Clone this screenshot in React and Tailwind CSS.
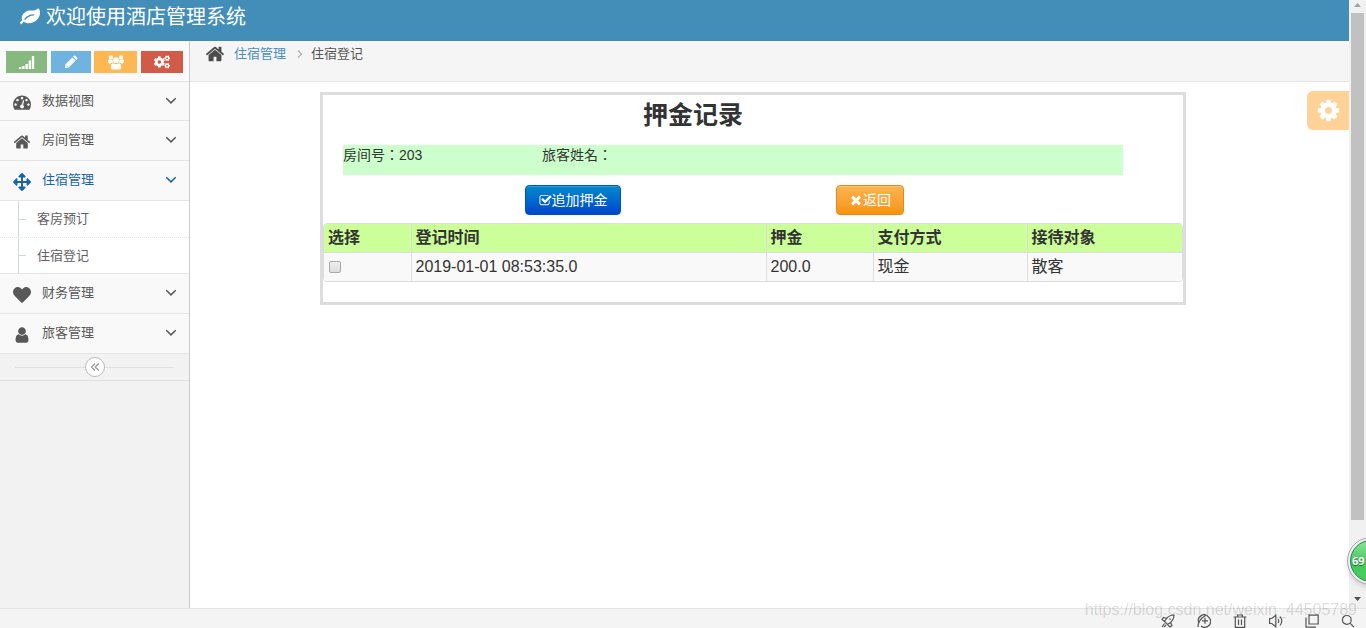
import React, { useState } from "react";
import { FaArrowsAlt, FaCogs, FaHeart } from "react-icons/fa";

const paths = {
  leaf: "M1280 704q0-26-19-45t-45-19q-172 0-318 49.5t-259.5 134-235.5 219.5q-19 21-19 45 0 26 19 45t45 19q24 0 45-19 27-24 74-71t67-66q137-124 268.5-176t313.5-52q26 0 45-19t19-45zm512-198q0 95-20 193-46 224-184.5 383t-357.5 268q-214 108-438 108-148 0-286-47-15-5-88-42t-96-37q-16 0-39.5 32t-45 70-52.5 70-60 32q-43 0-63.5-17.5t-45.5-59.5q-2-4-6-11t-5.5-10-3-9.5-1.5-13.5q0-35 31-73.5t68-65.5 68-56 31-48q0-4-14-38t-16-44q-9-51-9-104 0-115 43.5-220t119-184.5 170.5-139 204-95.5q55-18 145-25.5t179.5-9 178.5-6 163.5-24 113.5-56.5l29.5-29.5 29.5-28 27-20 36.5-16 43.5-4.5q39 0 70.5 46t47.5 112 24 124 8 96z",
  home: "M1472 992v480q0 26-19 45t-45 19h-384v-384h-256v384h-384q-26 0-45-19t-19-45v-480q0-1 .5-3t.5-3l575-474 575 474q1 2 1 6zm223-69l-62 74q-8 9-21 11h-3q-13 0-21-7l-692-577-692 577q-12 8-24 7-13-2-21-11l-62-74q-8-10-7-23.5t11-21.5l719-599q32-26 76-26t76 26l244 204v-195q0-14 9-23t23-9h192q14 0 23 9t9 23v408l219 182q10 8 11 21.5t-7 23.5z",
  dashboard: "M384 1152q0-53-37.5-90.5t-90.5-37.5-90.5 37.5-37.5 90.5 37.5 90.5 90.5 37.5 90.5-37.5 37.5-90.5zm192-448q0-53-37.5-90.5t-90.5-37.5-90.5 37.5-37.5 90.5 37.5 90.5 90.5 37.5 90.5-37.5 37.5-90.5zm428 481l101-382q6-26-7.5-48.5t-38.5-29.5-48 6.5-30 39.5l-101 382q-60 5-107 43.5t-63 98.5q-20 77 20 146t117 89 146-20 89-117q16-60-6-117t-72-91zm660-33q0-53-37.5-90.5t-90.5-37.5-90.5 37.5-37.5 90.5 37.5 90.5 90.5 37.5 90.5-37.5 37.5-90.5zm-640-640q0-53-37.5-90.5t-90.5-37.5-90.5 37.5-37.5 90.5 37.5 90.5 90.5 37.5 90.5-37.5 37.5-90.5zm448 192q0-53-37.5-90.5t-90.5-37.5-90.5 37.5-37.5 90.5 37.5 90.5 90.5 37.5 90.5-37.5 37.5-90.5zm320 448q0 261-141 483-19 29-54 29h-1402q-35 0-54-29-141-221-141-483 0-182 71-348t191-286 286-191 348-71 348 71 286 191 191 286 71 348z",
  user: "M1536 1399q0 109-62.5 187t-150.5 78h-854q-88 0-150.5-78t-62.5-187q0-85 8.5-160.5t31.5-152 58.5-131 94-89 134.5-34.5q131 128 313 128t313-128q76 0 134.5 34.5t94 89 58.5 131 31.5 152 8.5 160.5zm-256-887q0 159-112.5 271.5t-271.5 112.5-271.5-112.5-112.5-271.5 112.5-271.5 271.5-112.5 271.5 112.5 112.5 271.5z",
  cog: "M1152 896q0-106-75-181t-181-75-181 75-75 181 75 181 181 75 181-75 75-181zm512-109v222q0 12-8 23t-20 13l-185 28q-19 54-39 91 35 50 107 138 10 12 10 25t-9 23q-27 37-99 108t-94 71q-12 0-26-9l-138-108q-44 23-91 38-16 136-29 186-7 28-36 28h-222q-14 0-24.5-8.5t-11.5-21.5l-28-184q-49-16-90-37l-141 107q-10 9-25 9-14 0-25-11-126-114-165-168-7-10-7-23 0-12 8-23 15-21 51-66.5t54-70.5q-27-50-41-99l-183-27q-13-2-21-12.5t-8-23.5v-222q0-12 8-23t19-13l186-28q14-46 39-92-40-57-107-138-10-12-10-24 0-10 9-23 26-36 98.5-107.5t94.5-71.5q13 0 26 10l138 107q44-23 91-38 16-136 29-186 7-28 36-28h222q14 0 24.5 8.5t11.5 21.5l28 184q49 16 90 37l142-107q9-9 24-9 13 0 25 10 129 119 165 170 7 8 7 22 0 12-8 23-15 21-51 66.5t-54 70.5q26 50 41 98l183 28q13 2 21 12.5t8 23.5z",
  check: "M1472 930v318q0 119-84.5 203.5t-203.5 84.5h-832q-119 0-203.5-84.5t-84.5-203.5v-832q0-119 84.5-203.5t203.5-84.5h832q63 0 117 25 15 7 18 23 3 17-9 29l-49 49q-10 10-23 10-3 0-9-2-23-6-45-6h-832q-66 0-113 47t-47 113v832q0 66 47 113t113 47h832q66 0 113-47t47-113v-254q0-13 9-22l64-64q10-10 23-10 6 0 12 3 20 8 20 29zm231-489l-814 814q-24 24-57 24t-57-24l-430-430q-24-24-24-57t24-57l110-110q24-24 57-24t57 24l263 263 647-647q24-24 57-24t57 24l110 110q24 24 24 57t-24 57z",
  times: "M1490 1322q0 40-28 68l-136 136q-28 28-68 28t-68-28l-294-294-294 294q-28 28-68 28t-68-28l-136-136q-28-28-28-68t28-68l294-294-294-294q-28-28-28-68t28-68l136-136q28-28 68-28t68 28l294 294 294-294q28-28 68-28t68 28l136 136q28 28 28 68t-28 68l-294 294 294 294q28 28 28 68z",
};

const Icon = ({ name, className }) => (
  <svg viewBox="0 0 1792 1792" fill="currentColor" className={className} aria-hidden="true">
    <path d={paths[name]} />
  </svg>
);

const SignalIcon = () => (
  <svg viewBox="0 0 16 14" fill="currentColor" className="h-[14px] w-4" aria-hidden="true">
    <path d="M0 12h2.4v2H0zM3.2 11h2.4v3H3.2zM6.4 9h2.4v5H6.4zM9.6 5.5H12V14H9.6zM12.8 1h2.4v13h-2.4z" />
  </svg>
);

const PencilIcon = () => (
  <svg viewBox="0 0 14 14" fill="currentColor" className="size-[14px]" aria-hidden="true">
    <path d="M.8 13.2l.7-3.9 6.9-6.9 3.2 3.2-6.9 6.9zM9.1 1.7l.9-.9q.6-.6 1.2 0l2 2q.6.6 0 1.2l-.9.9z" />
    <path d="M2.1 10.3l1.6 1.6" stroke="#6fb3e0" strokeWidth="0.8" />
  </svg>
);

const GroupIcon = () => (
  <svg viewBox="0 0 16 15" fill="currentColor" className="h-[15px] w-4" aria-hidden="true">
    <circle cx="3" cy="2.4" r="2.1" />
    <circle cx="13" cy="2.4" r="2.1" />
    <path d="M0 6.6Q0 4.3 1.5 4.3q1.4.9 2.9.3Q4.3 6.6 5.4 7.7H4Q3 7.8 2.5 8.5H1.6Q0 8.5 0 6.6zM16 6.6q0-2.3-1.5-2.3-1.4.9-2.9.3.1 2-1 3.1H12q1 .1 1.5.8h.9q1.6 0 1.6-1.9z" />
    <circle cx="8" cy="5.2" r="2.9" />
    <path d="M2.8 12.4q0-4.2 2.7-4.2Q8 10 10.500 8.200q2.700 0 2.700 4.200 0 2.200-2 2.200H4.800q-2 0-2-2.200z" />
  </svg>
);

const ChevronIcon = () => (
  <svg viewBox="0 0 12 8" fill="none" stroke="currentColor" strokeWidth="1.5" className="ml-auto h-2 w-3" aria-hidden="true">
    <path d="M1.300 1.200L6 5.900l4.700-4.700" />
  </svg>
);

const menu = [
  { label: "数据视图", icon: <Icon name="dashboard" className="size-[18px]" /> },
  { label: "房间管理", icon: <Icon name="home" className="size-[18px]" /> },
  {
    label: "住宿管理",
    icon: <FaArrowsAlt className="size-[18px]" />,
    active: true,
    children: ["客房预订", "住宿登记"],
  },
  { label: "财务管理", icon: <FaHeart className="size-[18px]" /> },
  { label: "旅客管理", icon: <Icon name="user" className="size-[18px]" /> },
];

const Header = () => (
  <header className="flex h-[41px] shrink-0 items-start bg-[#438eb9] pl-5 text-white">
    <a href="#" className="flex items-center gap-[6px] text-xl leading-[34px]">
      <Icon name="leaf" className="size-5" />
      欢迎使用酒店管理系统
    </a>
  </header>
);

const Sidebar = () => (
  <aside className="w-[190px] shrink-0 border-r border-[#ccc] bg-[#f2f2f2]">
    <div className="flex h-[41px] items-end justify-between border-b border-[#ddd] bg-[#fafafa] px-[6px] pb-2 text-white">
      <button type="button" aria-label="统计" className="flex h-[22px] w-[41px] items-center justify-center bg-[#87b87f]">
        <SignalIcon />
      </button>
      <button type="button" aria-label="编辑" className="flex h-[22px] w-10 items-center justify-center bg-[#6fb3e0]">
        <PencilIcon />
      </button>
      <button type="button" aria-label="用户" className="flex h-[22px] w-[43px] items-center justify-center bg-[#ffb752]">
        <GroupIcon />
      </button>
      <button type="button" aria-label="设置" className="flex h-[22px] w-[42px] items-center justify-center bg-[#d15b47]">
        <FaCogs className="size-4" />
      </button>
    </div>

    <ul className="-mt-px border-t border-[#e5e5e5]">
      {menu.map((item, i) => (
        <li key={item.label}>
          <a
            href="#"
            className={`flex items-center border-b border-[#e5e5e5] bg-[#f9f9f9] pr-3 pb-px pl-[10px] ${
              i === 0 ? "h-[39px]" : "h-10"
            } ${item.active ? "text-[#1963aa]" : "text-[#585858]"}`}
          >
            <span className="mr-2 flex w-6 justify-center pt-[3px]">{item.icon}</span>
            {item.label}
            <ChevronIcon />
          </a>
          {item.children && (
            <ul className="border-b border-[#e5e5e5] bg-white">
              {item.children.map((child, n) => (
                <li key={child} className={n > 0 ? "border-t border-dotted border-[#e4e4e4]" : ""}>
                  <a
                    href="#"
                    className={`ml-[18px] flex items-center border-l border-[#ccd7e2] text-[#616161] ${
                      n > 0 ? "h-[35px]" : "h-9"
                    }`}
                  >
                    <span className="mr-[11px] w-[7px] border-t border-[#ccd7e2]" />
                    {child}
                  </a>
                </li>
              ))}
            </ul>
          )}
        </li>
      ))}
    </ul>

    <div className="flex h-[27px] items-center border-b border-[#e0e0e0] px-[15px]">
      <span className="h-px flex-1 bg-[#e0e0e0]" />
      <button type="button" aria-label="收起" className="flex size-5 items-center justify-center rounded-full border border-[#bbb] bg-white text-[#999]">
        <svg viewBox="0 0 10 10" fill="none" stroke="currentColor" strokeWidth="1.3" className="size-[10px]">
          <path d="M5 1.500L1.500 5 5 8.500M8.800 1.500L5.300 5l3.500 3.500" />
        </svg>
      </button>
      <span className="h-px flex-1 bg-[#e0e0e0]" />
    </div>
  </aside>
);

const Breadcrumbs = () => (
  <nav className="flex h-[41px] items-start border-b border-[#e5e5e5] bg-[#f5f5f5] pl-[15px]">
    <div className="flex h-[25px] items-center">
      <Icon name="home" className="mr-[9px] size-5 text-[#4c4c4c]" />
      <a href="#" className="text-[#4c8fbd]">住宿管理</a>
      <svg viewBox="0 0 6 10" fill="none" stroke="#b2b6bf" strokeWidth="1.5" className="mr-2 ml-[11px] h-[10px] w-[6px]">
        <path d="M1 1.500L4.500 5 1 8.500" />
      </svg>
      <span className="text-[#555]">住宿登记</span>
    </div>
  </nav>
);

const DepositPanel = () => {
  const [checked, setChecked] = useState(false);

  return (
    <section className="border-[3px] border-[#ddd] pb-5 text-[#333]">
      <h3 className="mb-[10px] pl-[320px] text-[25px] leading-10 font-bold">押金记录</h3>
      <div className="mr-[60px] ml-5 flex h-[30px] bg-[#ccffcc] font-['Liberation_Sans','Noto_Sans_CJK_TC',sans-serif] text-sm leading-5">
        <span className="w-[199px]">房间号：203</span>
        <span>旅客姓名：</span>
      </div>

      <div className="mt-[10px] flex gap-[215px] pl-[202px] text-sm text-white [text-shadow:0_-1px_0_rgba(0,0,0,0.25)]">
        <button
          type="button"
          className="flex h-[30px] w-24 items-center justify-center rounded border border-[#0055b3] bg-linear-to-b from-[#0088cc] to-[#0044cc] shadow-[inset_0_1px_0_rgba(255,255,255,0.2),0_1px_2px_rgba(0,0,0,0.05)]"
        >
          <Icon name="check" className="size-[13px]" />
          追加押金
        </button>
        <button
          type="button"
          className="flex h-[30px] w-[68px] items-center justify-center rounded border border-[#de8a1c] bg-linear-to-b from-[#fbb450] to-[#f89406] shadow-[inset_0_1px_0_rgba(255,255,255,0.2),0_1px_2px_rgba(0,0,0,0.05)]"
        >
          <Icon name="times" className="size-[14px]" />
          返回
        </button>
      </div>

      <div className="mt-2 overflow-hidden rounded border border-[#ddd]">
        <table className="w-full table-fixed text-left text-base leading-5">
          <thead>
            <tr className="bg-[#ccff99]">
              <th className="w-[87px] px-1 py-1">选择</th>
              <th className="border-l border-[#ddd] px-1 py-1">登记时间</th>
              <th className="w-[107px] border-l border-[#ddd] px-1 py-1">押金</th>
              <th className="w-[154px] border-l border-[#ddd] px-1 py-1">支付方式</th>
              <th className="w-[155px] border-l border-[#ddd] px-1 py-1">接待对象</th>
            </tr>
          </thead>
          <tbody>
            <tr className="border-t border-[#ddd] bg-[#f9f9f9]">
              <td className="px-1 py-1">
                <input
                  type="checkbox"
                  aria-label="选择"
                  checked={checked}
                  onChange={(e) => setChecked(e.target.checked)}
                  className="ml-px block size-3 appearance-none rounded-xs border border-[#a9a9a9] bg-linear-to-b from-[#eee] to-[#ddd] checked:from-[#438eb9] checked:to-[#438eb9]"
                />
              </td>
              <td className="border-l border-[#ddd] px-1 py-1">2019-01-01 08:53:35.0</td>
              <td className="border-l border-[#ddd] px-1 py-1">200.0</td>
              <td className="border-l border-[#ddd] px-1 py-1">现金</td>
              <td className="border-l border-[#ddd] px-1 py-1">散客</td>
            </tr>
          </tbody>
        </table>
      </div>
    </section>
  );
};

const ScrollBar = () => (
  <div className="flex w-[17px] shrink-0 flex-col items-center bg-[#f1f1f1]">
    <svg viewBox="0 0 17 13" className="h-[13px] w-[17px]">
      <path d="M5 7l3.500-4L12 7z" fill="#a3a3a3" />
    </svg>
    <div className="w-[13px] flex-1 bg-[#c1c1c1]" />
    <div className="flex h-[88px] items-end">
      <svg viewBox="0 0 17 17" className="size-[17px]">
        <path d="M5 6l3.500 4L12 6z" fill="#505050" />
      </svg>
    </div>
  </div>
);

const StatusIcon = ({ d }) => (
  <svg viewBox="0 0 14 14" fill="none" stroke="currentColor" strokeWidth="1.2" className="size-[14px]" aria-hidden="true">
    <path d={d} />
  </svg>
);

const StatusBar = () => (
  <footer className="flex h-5 shrink-0 items-end justify-end gap-[22px] border-t border-[#e4e4e4] bg-[#f4f4f4] pr-[11px] text-[#555]">
    <StatusIcon d="M13 1Q8.500 1 5.500 4.500L3.500 7.500l3 3 3-2Q13 5.500 13 1zM5.500 4.500L2.500 3.500 1 5.500l2.500 2M9.500 8.500l1.500 3-2 1.500-2.500-2.500M3.500 9.500L1 13M5 11l-2 2M8.500 4.500l1.200 1.200" />
    <StatusIcon d="M1 13Q1 6 8.500 1.500M1.700 8.500A5.700 5.700 0 0 1 11.500 3 5.700 5.700 0 0 1 4 12M5 6.800h6M8 3.800v6" />
    <StatusIcon d="M.5 3h13M4.500 3V1h5v2M2.300 3v10.300h9.400V3M5.500 5.500v5.500M8.500 5.500v5.500" />
    <StatusIcon d="M.6 4.500v5h2.200l4 3.300V1.200l-4 3.300zM9 5q1.500 2 0 4M11 2.500q3.500 4.500 0 9" />
    <StatusIcon d="M4 1.200h9.200v8.800H4zM1 3.500v9.700h10" />
    <StatusIcon d="M10.200 5.900a4.400 4.400 0 1 1-8.800 0 4.400 4.400 0 0 1 8.800 0zM9 9.200l3.800 3.800" />
  </footer>
);

const App = () => (
  <div className="relative flex min-h-screen flex-col overflow-hidden bg-white font-['Liberation_Sans','Noto_Sans_CJK_SC',sans-serif] text-[13px]">
    <div className="flex flex-1">
      <div className="flex min-w-0 flex-1 flex-col">
        <Header />
        <div className="flex flex-1">
          <Sidebar />
          <main className="relative min-w-0 flex-1">
            <Breadcrumbs />
            <div className="pt-[10px] pr-[163px] pl-[130px]">
              <DepositPanel />
            </div>
            <button
              type="button"
              aria-label="设置"
              className="absolute top-[50px] right-0 flex h-[39px] w-[42px] items-center justify-center rounded-l-md bg-[#ffd398] text-white"
            >
              <Icon name="cog" className="size-[25px]" />
            </button>
          </main>
        </div>
      </div>
      <ScrollBar />
    </div>
    <StatusBar />

    <div className="absolute -right-[29px] bottom-[43px] flex size-12 items-center rounded-full border border-[#aaa] bg-[#eee] p-[2px] shadow-md">
      <div className="flex size-full items-center rounded-full border border-[#1d8a4c] bg-linear-to-b from-[#8ae39a] via-[#44c85c] to-[#44d05c] pl-px font-['Open_Sans',sans-serif] text-[11px] font-bold text-white [text-shadow:0_1px_1px_rgba(0,0,0,0.5)]">
        69
      </div>
    </div>
    <p className="pointer-events-none absolute right-[9px] bottom-2 text-base leading-5 text-black/15">
      https://blog.csdn.net/weixin_44505789
    </p>
  </div>
);

export default App;
